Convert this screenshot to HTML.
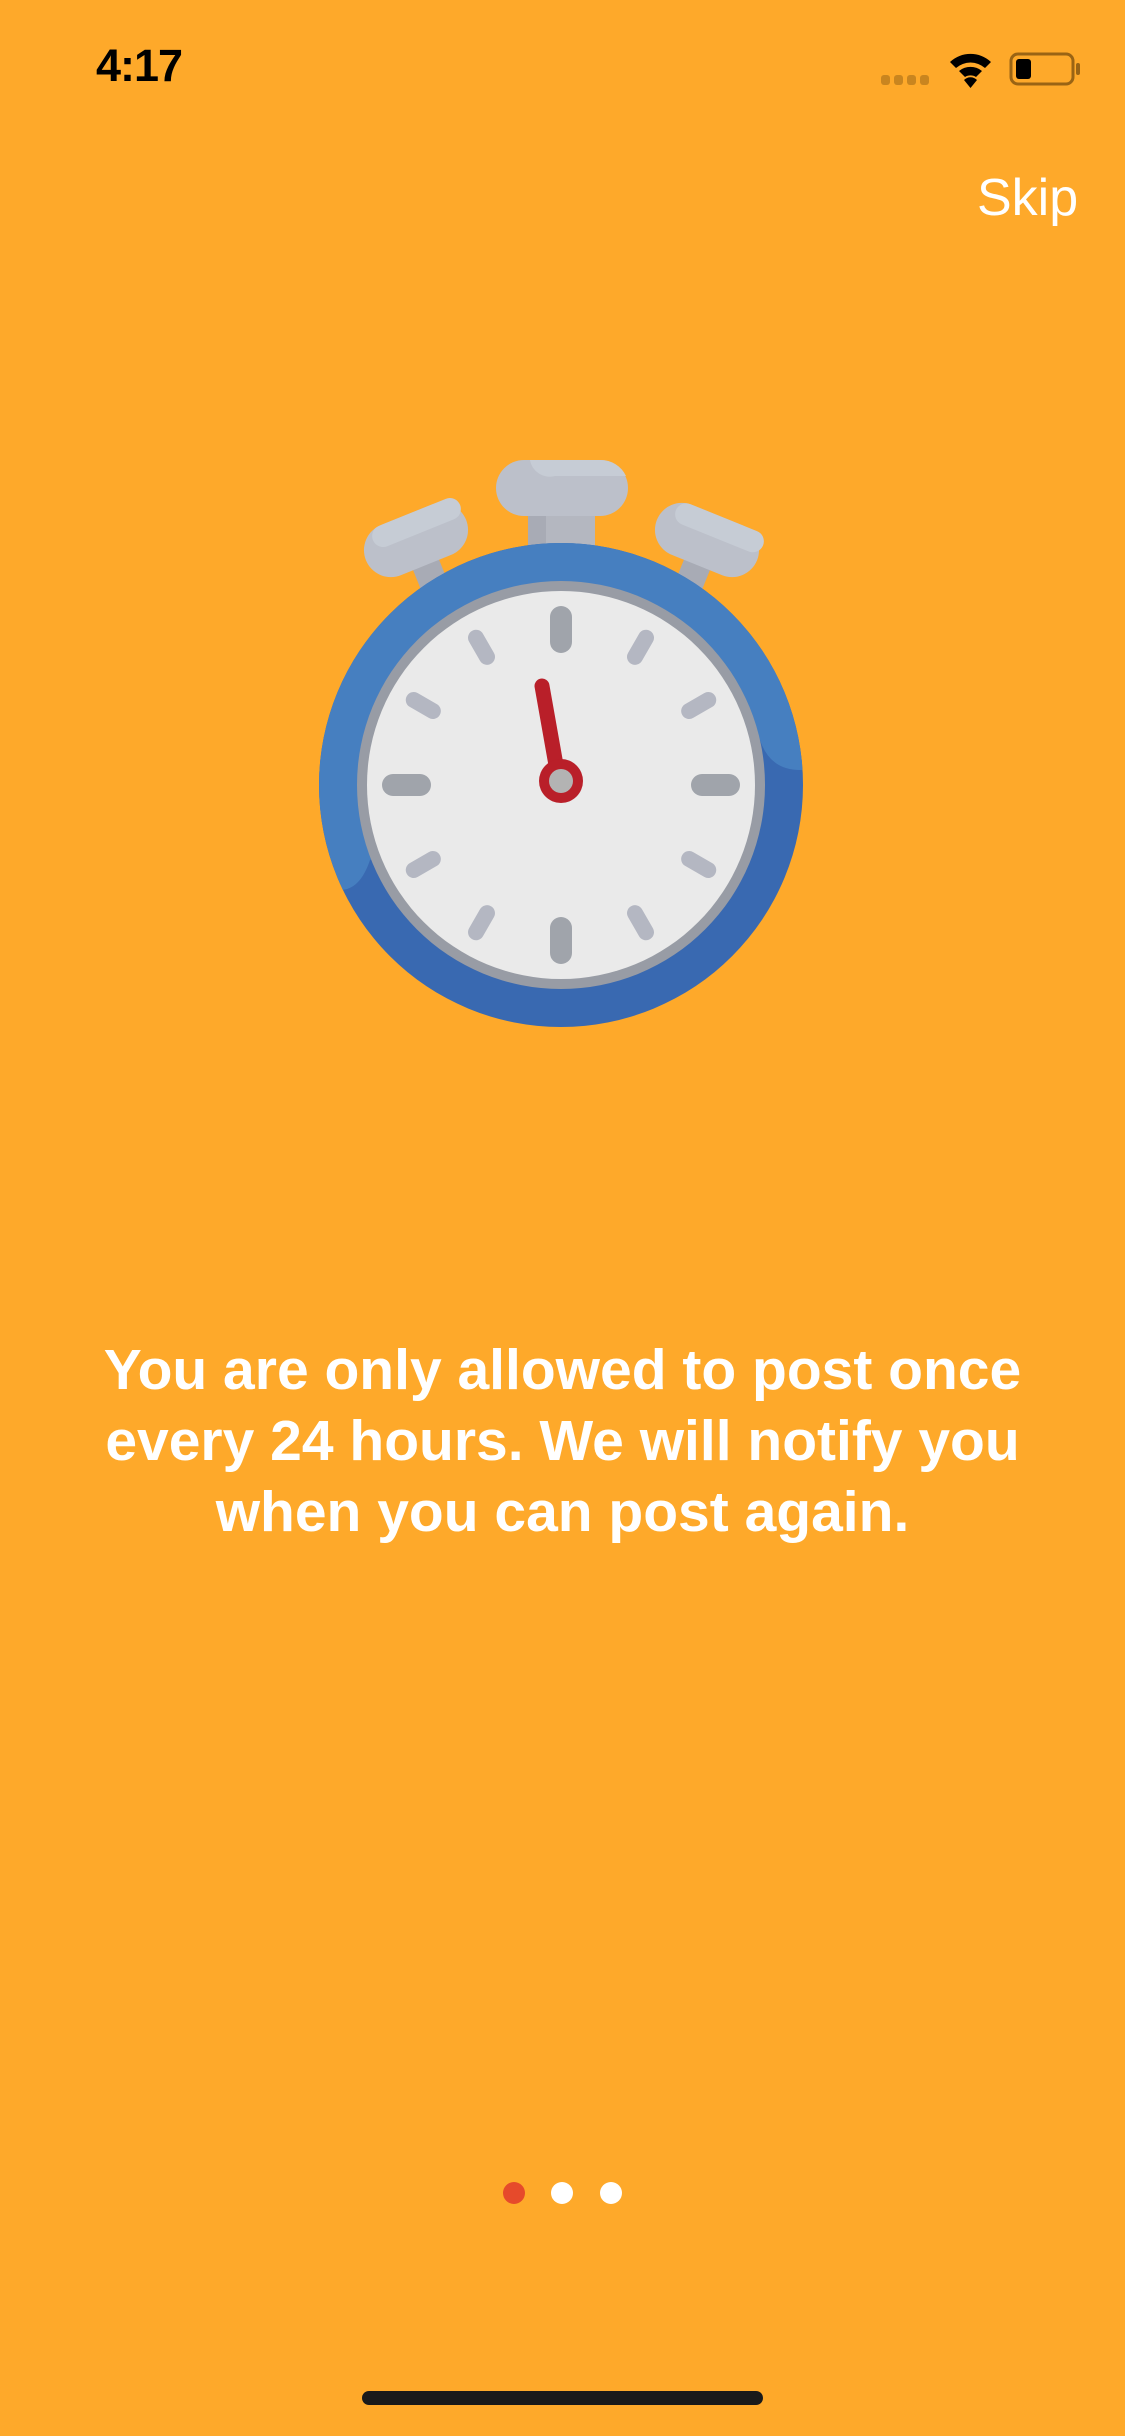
<!DOCTYPE html>
<html><head><meta charset="utf-8"><style>
html,body{margin:0;padding:0}
body{width:1125px;height:2436px;background:#fea92a;position:relative;overflow:hidden;font-family:"Liberation Sans",sans-serif}
.time{position:absolute;left:96px;top:40px;font-size:45px;font-weight:bold;color:#000;letter-spacing:-1px}
.skip{position:absolute;left:977px;top:168px;font-size:52px;color:#fff}
.msg{position:absolute;left:0;width:1125px;top:1335px;text-align:center;color:#fff;font-weight:bold;font-size:57px;line-height:71px;letter-spacing:0px}
.dot{position:absolute;top:2182px;width:22px;height:22px;border-radius:50%;background:#fff}
.home{position:absolute;left:362px;top:2391px;width:401px;height:14px;border-radius:7px;background:#1a1a1a}
</style></head><body>
<div class="time">4:17</div>
<svg style="position:absolute;left:0;top:0" width="1125" height="120">
<g fill="#c9851f"><rect x="881" y="75" width="9" height="10" rx="3"/><rect x="894" y="75" width="9" height="10" rx="3"/><rect x="907" y="75" width="9" height="10" rx="3"/><rect x="920" y="75" width="9" height="10" rx="3"/></g>
<g fill="#000" transform="translate(0 -4)"><path d="M950 66 A30 30 0 0 1 991 66 L985 72 A22 22 0 0 0 956 72Z"/><path d="M959 75 A18 18 0 0 1 982 75 L976 81 A10 10 0 0 0 965 81Z"/><path d="M970.5 92 L964 84 A9 9 0 0 1 977 84Z"/></g>
<rect x="1011" y="54" width="62" height="30" rx="7" fill="none" stroke="#9a6414" stroke-width="3"/>
<rect x="1016" y="59" width="15" height="20" rx="3" fill="#000"/>
<rect x="1076" y="63" width="4" height="12" rx="2" fill="#9a6414"/>
</svg>
<div class="skip">Skip</div>
<svg style="position:absolute;left:0;top:0" width="1125" height="1100">
<defs><clipPath id="c"><circle cx="561" cy="785" r="242"/></clipPath></defs>
<g transform="translate(416 540) rotate(-22)">
<rect x="-14" y="10" width="28" height="40" fill="#a8abb5"/>
<rect x="-54" y="-27" width="108" height="54" rx="27" fill="#bcc0ca"/>
<rect x="-40" y="-27" width="94" height="22" rx="11" fill="#c6ccd5"/>
</g>
<g transform="translate(707 540) rotate(22)">
<rect x="-14" y="10" width="28" height="40" fill="#a8abb5"/>
<rect x="-54" y="-27" width="108" height="54" rx="27" fill="#bcc0ca"/>
<rect x="-40" y="-27" width="94" height="22" rx="11" fill="#c6ccd5"/>
</g>
<rect x="528" y="510" width="67" height="40" fill="#b4b7c0"/>
<rect x="528" y="510" width="18" height="40" fill="#a8abb5"/>
<rect x="496" y="460" width="132" height="56" rx="28" fill="#bcc0ca"/>
<path d="M530 460 H600 A28 28 0 0 1 626 476 H555 A20 20 0 0 1 530 460Z" fill="#c6ccd5"/>
<circle cx="561" cy="785" r="242" fill="#3969b1"/>
<g clip-path="url(#c)"><path d="M300 300 H840 V740 Q830 770 800 770 Q770 770 760 740 L370 860 Q360 890 340 890 Q310 890 300 860Z" fill="#467fc0"/></g>
<circle cx="561" cy="785" r="204" fill="#989ca5"/>
<circle cx="561" cy="785" r="194" fill="#eaeaea"/>
<g stroke-linecap="round">
<g stroke="#a0a4ab" stroke-width="22">
<line x1="561" y1="617" x2="561" y2="642"/><line x1="561" y1="928" x2="561" y2="953"/>
<line x1="393" y1="785" x2="420" y2="785"/><line x1="702" y1="785" x2="729" y2="785"/>
</g>
<g stroke="#b4b7c2" stroke-width="16" transform="translate(561 785)">
<g transform="rotate(30)"><line x1="0" y1="-170" x2="0" y2="-148"/></g>
<g transform="rotate(60)"><line x1="0" y1="-170" x2="0" y2="-148"/></g>
<g transform="rotate(120)"><line x1="0" y1="-170" x2="0" y2="-148"/></g>
<g transform="rotate(150)"><line x1="0" y1="-170" x2="0" y2="-148"/></g>
<g transform="rotate(210)"><line x1="0" y1="-170" x2="0" y2="-148"/></g>
<g transform="rotate(240)"><line x1="0" y1="-170" x2="0" y2="-148"/></g>
<g transform="rotate(300)"><line x1="0" y1="-170" x2="0" y2="-148"/></g>
<g transform="rotate(330)"><line x1="0" y1="-170" x2="0" y2="-148"/></g>
</g>
</g>
<line x1="542" y1="686" x2="556" y2="765" stroke="#b91f29" stroke-width="15" stroke-linecap="round"/>
<circle cx="561" cy="781" r="22" fill="#b91f29"/>
<circle cx="561" cy="781" r="12" fill="#b3b3b3"/>
</svg>
<div class="msg">You are only allowed to post once<br>every 24 hours. We will notify you<br>when you can post again.</div>
<div class="dot" style="left:503px;background:#e64a2b"></div>
<div class="dot" style="left:551px"></div>
<div class="dot" style="left:600px"></div>
<div class="home"></div>
</body></html>
